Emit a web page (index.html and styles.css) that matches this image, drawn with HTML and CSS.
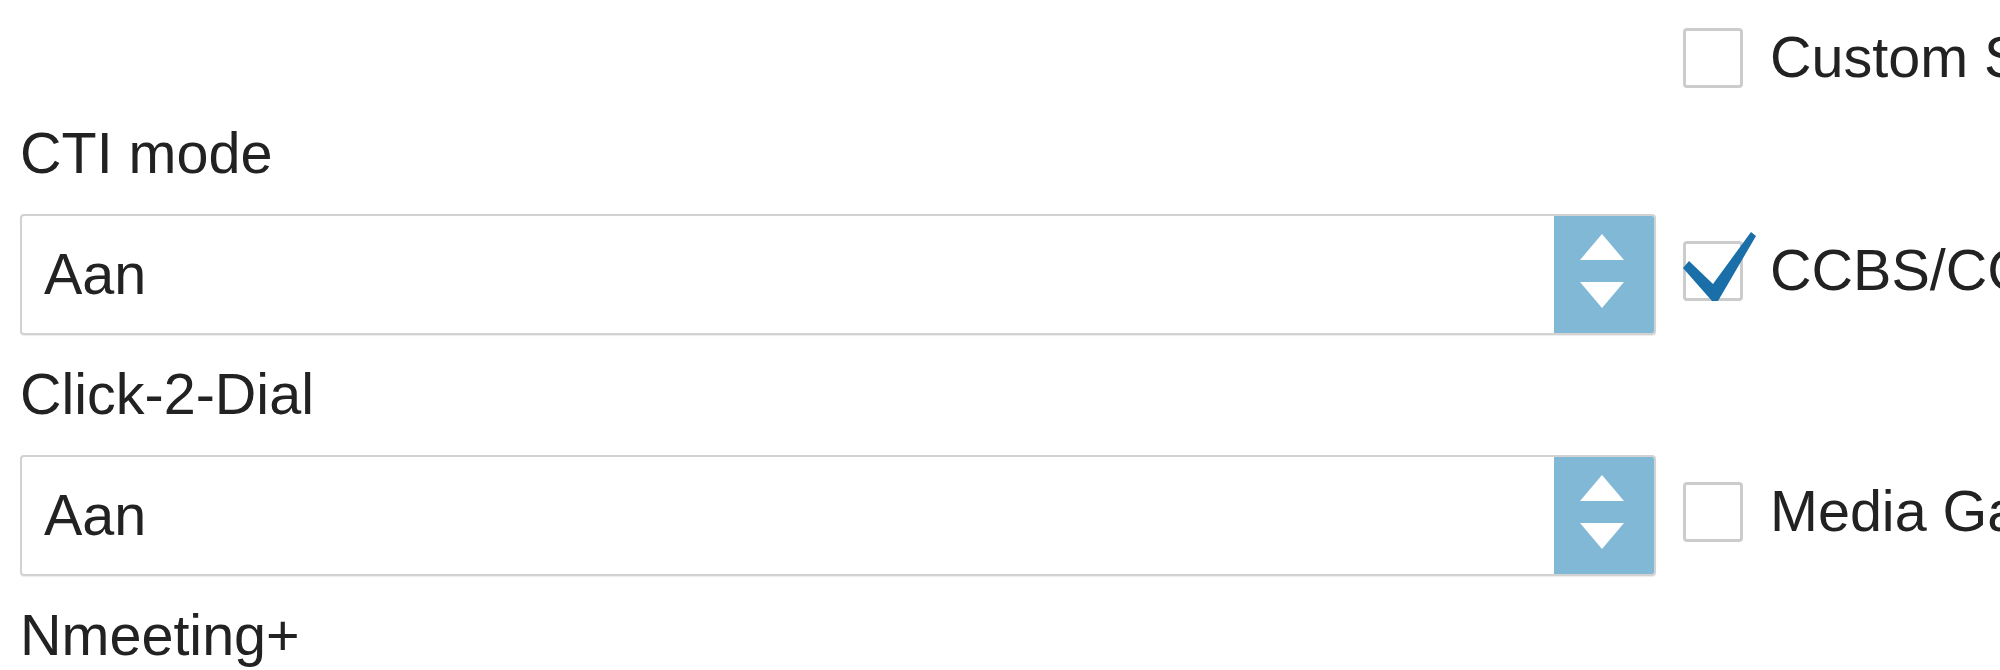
FILE: index.html
```html
<!DOCTYPE html>
<html>
    <head>
        <meta charset="utf-8">
        <title>Toestel instellingen</title>
        <link rel="stylesheet" href="styles.css">
    </head>
    <body>
        <div class="form">
            <div class="row row-top">
                <div></div>
                <div class="option">
                    <span class="box"></span>
                    <span class="option-text">Custom SIP headers</span>
                </div>
            </div>

            <div class="row">
                <div class="field">
                    <div class="label">CTI mode</div>
                    <div class="select">
                        <div class="select-value">Aan</div>
                        <div class="select-spin">
                            <span class="arrow-up"></span>
                            <span class="arrow-down"></span>
                        </div>
                    </div>
                </div>
                <div class="option">
                    <span class="box checked">
                        <svg class="tick" viewBox="0 0 80 76" width="80" height="76">
                            <path d="M2 39 L8 32 L32 55 L70 3 L75 7 L37 72 L31 72 Z"/>
                        </svg>
                    </span>
                    <span class="option-text">CCBS/CCNR</span>
                </div>
            </div>

            <div class="row">
                <div class="field">
                    <div class="label">Click-2-Dial</div>
                    <div class="select">
                        <div class="select-value">Aan</div>
                        <div class="select-spin">
                            <span class="arrow-up"></span>
                            <span class="arrow-down"></span>
                        </div>
                    </div>
                </div>
                <div class="option">
                    <span class="box"></span>
                    <span class="option-text">Media Gateway</span>
                </div>
            </div>

            <div class="row">
                <div class="field">
                    <div class="label">Nmeeting+</div>
                    <div class="select">
                        <div class="select-value">Uit</div>
                        <div class="select-spin">
                            <span class="arrow-up"></span>
                            <span class="arrow-down"></span>
                        </div>
                    </div>
                </div>
                <div></div>
            </div>
        </div>
    </body>
</html>
```

FILE: styles.css
```css
html, body {
    margin: 0;
    overflow: hidden;
    background: white;
}

body {
    font-family: "Liberation Sans", Arial, Helvetica, sans-serif;
    font-size: 57.5px;
    color: #222222;
}

.form {
    padding-left: 20px;
}

.row {
    display: grid;
    grid-template-columns: 1636px 1fr;
    column-gap: 27px;
    align-items: end;
}

.row-top {
    padding-top: 28px;
}

.row-top .option {
    margin-bottom: 6px;
}

/* left column: label above a select */
.label {
    padding-top: 19px;
    margin-bottom: 21px;
    line-height: 80px;
}

.select {
    display: flex;
    height: 121px;
    box-sizing: border-box;
    border: 2px solid #d2d2d2;
    border-radius: 4px;
    box-shadow: 0 1px 1px rgba(0,0,0,0.08);
    overflow: hidden;
}

.select-value {
    flex: 1;
    padding-left: 22px;
    line-height: 117px;
}

.select-spin {
    width: 100px;
    background: #80b8d5;
    display: flex;
    flex-direction: column;
    align-items: center;
    justify-content: center;
    gap: 22px;
    padding-bottom: 8px;
    padding-right: 4px;
    box-sizing: border-box;
}

.arrow-up {
    border-left: 22px solid transparent;
    border-right: 22px solid transparent;
    border-bottom: 26px solid white;
}

.arrow-down {
    border-left: 22px solid transparent;
    border-right: 22px solid transparent;
    border-top: 26px solid white;
}

/* right column: checkbox options */
.option {
    display: flex;
    align-items: flex-start;
    margin-bottom: 34px;
    white-space: nowrap;
}

.box {
    position: relative;
    flex: none;
    width: 60px;
    height: 60px;
    box-sizing: border-box;
    border: 3px solid #cccccc;
    border-radius: 4px;
    background: white;
}

.tick {
    position: absolute;
    left: -5px;
    top: -15px;
    fill: #1b6fa8;
}

.option-text {
    margin-left: 27px;
    padding-top: 3px;
    line-height: 52px;
}
```
